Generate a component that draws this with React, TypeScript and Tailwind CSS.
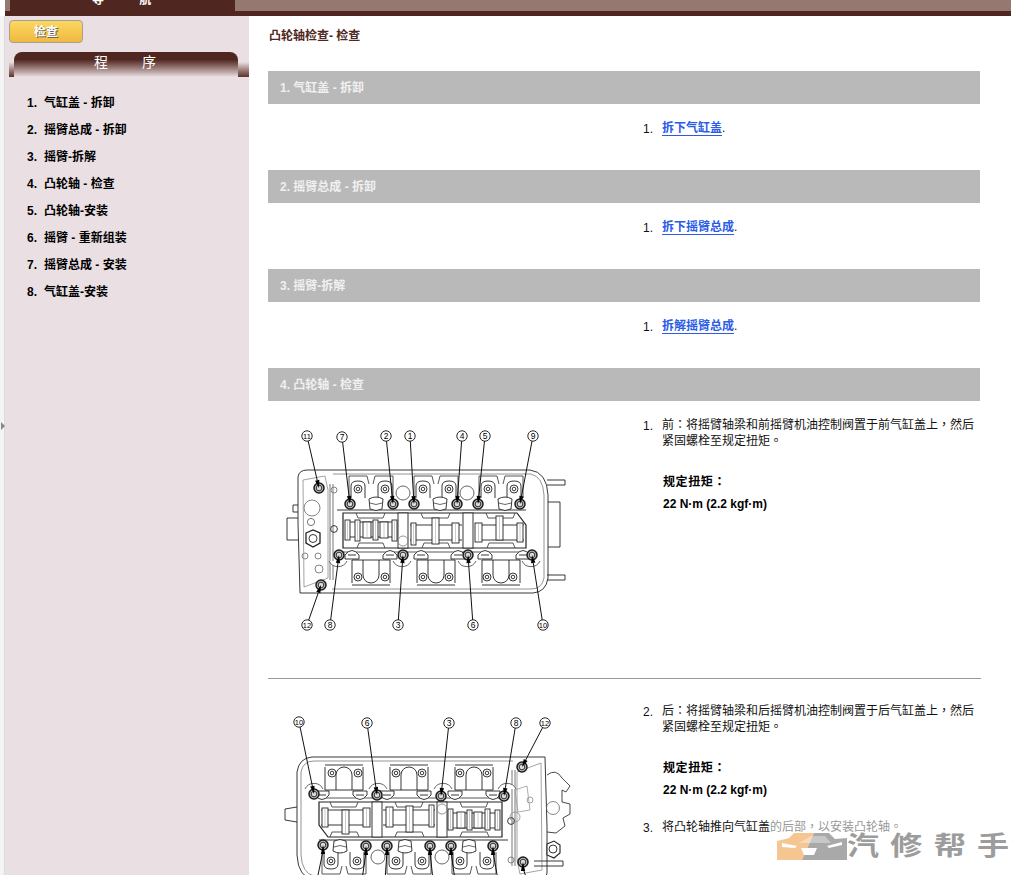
import React from "react";

const FONT = "font-['Liberation_Sans','Noto_Sans_CJK_TC',sans-serif]";

const NAV = [
  "气缸盖 - 拆卸",
  "摇臂总成 - 拆卸",
  "摇臂-拆解",
  "凸轮轴 - 检查",
  "凸轮轴-安装",
  "摇臂 - 重新组装",
  "摇臂总成 - 安装",
  "气缸盖-安装",
];

const SECTIONS = [
  { title: "1. 气缸盖 - 拆卸", link: "拆下气缸盖" },
  { title: "2. 摇臂总成 - 拆卸", link: "拆下摇臂总成" },
  { title: "3. 摇臂-拆解", link: "拆解摇臂总成" },
];

type Callout = { n: number; lx: number; ly: number; bx: number; by: number };

const FRONT: Callout[] = [
  { n: 11, lx: 307, ly: 436, bx: 319, by: 488 },
  { n: 7, lx: 342, ly: 437, bx: 350, by: 504 },
  { n: 2, lx: 386, ly: 436, bx: 393, by: 504 },
  { n: 1, lx: 410, ly: 436, bx: 414, by: 504 },
  { n: 4, lx: 462, ly: 436, bx: 457, by: 504 },
  { n: 5, lx: 485, ly: 436, bx: 478, by: 504 },
  { n: 9, lx: 533, ly: 436, bx: 520, by: 504 },
  { n: 12, lx: 307, ly: 625, bx: 321, by: 585 },
  { n: 8, lx: 330, ly: 625, bx: 339, by: 555 },
  { n: 3, lx: 398, ly: 625, bx: 403, by: 555 },
  { n: 6, lx: 473, ly: 625, bx: 468, by: 555 },
  { n: 10, lx: 543, ly: 625, bx: 532, by: 555 },
];

const REAR: Callout[] = [
  { n: 10, lx: 299, ly: 722, bx: 314, by: 794 },
  { n: 6, lx: 367, ly: 723, bx: 377, by: 795 },
  { n: 3, lx: 449, ly: 723, bx: 441, by: 796 },
  { n: 8, lx: 516, ly: 723, bx: 504, by: 796 },
  { n: 12, lx: 545, ly: 723, bx: 522, by: 767 },
];

const REAR_LOWER = [
  [323, 845, 317],
  [366, 846, 362],
  [387, 846, 385],
  [430, 846, 433],
  [451, 846, 455],
  [493, 846, 498],
  [523, 862, 527],
];

const PADS = [358, 385, 423, 449, 488, 514];
const GROUPS = [371, 436, 501];
const TAPPETS = [376, 440, 505];
const CAPS = [345, 383, 414, 451, 478, 516];
const BOSSES = [338, 402, 467, 531];
// [x, width, top, bottom] of the cam lobes seen through the window
const LOBES = [
  [345, 5, 520, 540],
  [355, 5, 520, 541],
  [363, 8, 522, 538],
  [373, 5, 520, 540],
  [380, 8, 522, 538],
  [392, 5, 520, 541],
  [411, 5, 523, 545],
  [432, 7, 518, 544],
  [452, 7, 523, 543],
  [475, 7, 523, 542],
  [496, 7, 516, 540],
  [517, 6, 523, 542],
];

// Cylinder head line drawing, in page coordinates of the front view.
const Head = ({ rear }: { rear?: boolean }) => (
  <g transform={rear ? "rotate(180 422.5 675)" : undefined} fill="none" stroke="#222" strokeWidth="0.9">
    <path d="M298 477 Q299 470 307 470 L530 470 Q547 472 548 495 L548 578 Q546 592 533 593 L300 593 L298 523 Z" />
    <path d="M333 474 L531 474 Q543 477 544 495 L544 578 Q542 589 531 589 L332 589" stroke="#888" />
    {!rear && (
      <>
        <path d="M547 480 L565 480 L565 485 L547 485 M547 575 L565 575 L565 580 L547 580 M548 502 L560 502 L560 547 L548 547" />
        <path d="M298 505 L293 505 L293 512 L298 512 M298 518 L287 518 L287 540 L298 540" />
        <path d="M306 533 L313 530 L320 533 L320 543 L313 547 L306 543 Z" strokeWidth="1.3" />
        <circle cx="313" cy="538.5" r="4" />
        <circle cx="312" cy="508" r="8" stroke="#777" />
        <circle cx="311" cy="522" r="3.6" stroke="#666" />
        <circle cx="305" cy="556" r="3" stroke="#777" />
        <circle cx="318" cy="556" r="3" stroke="#777" />
        <circle cx="319" cy="569" r="4" stroke="#777" />
      </>
    )}
    <path d="M303 480 L325 476 L328 490 L328 578 L304 587 Z" stroke="#999" />
    <path d="M330 484 L330 580 M333 484 L333 580" stroke="#666" />
    <circle cx="334" cy="529" r="3.4" />
    <circle cx="334" cy="490" r="3" stroke="#777" />

    {GROUPS.map((g) => (
      <path key={g} d={`M${g - 22} 498 L${g - 22} 476 L${g - 4} 476 L${g - 2} 484 M${g + 2} 484 L${g + 4} 476 L${g + 22} 476 L${g + 22} 498`} stroke="#444" />
    ))}
    {PADS.map((x) => (
      <g key={x}>
        <path d={`M${x - 7} 498 L${x - 7} 486 Q${x - 7} 481 ${x} 481 Q${x + 7} 481 ${x + 7} 486 L${x + 7} 498`} />
        <circle cx={x} cy={489} r="4" />
        <circle cx={x} cy={489} r="1.8" />
      </g>
    ))}
    <circle cx="403" cy="493" r="7" stroke="#555" />
    <circle cx="467" cy="493" r="7" stroke="#555" />
    <path d="M337 510 L526 510" />

    <path d="M343 513 L517 513 L526 525 L526 548 L343 548 Z" strokeWidth="1.2" />
    <path d="M345 522 L397 522 M345 537 L397 537 M410 525 L462 525 M410 540 L462 540 M475 525 L524 525 M475 540 L524 540" />
    {GROUPS.map((g) => (
      <path key={g} d={`M${g - 15} 513 L${g - 13} 518 L${g + 12} 518 L${g + 14} 513 M${g - 14} 548 L${g - 12} 543 L${g + 12} 543 L${g + 14} 548`} stroke="#444" />
    ))}
    {LOBES.map(([x, w, top, bottom]) => (
      <g key={x}>
        <rect x={x} y={top} width={w} height={bottom - top} fill="#fff" />
        <line x1={x + w / 2} y1={top} x2={x + w / 2} y2={bottom} stroke="#aaa" strokeWidth="0.6" />
      </g>
    ))}
    <rect x="398" y="513" width="10" height="35" fill="#fff" />
    <rect x="463" y="513" width="10" height="35" fill="#fff" />
    <circle cx="403" cy="541" r="5" stroke="#888" />

    {TAPPETS.map((x) => (
      <g key={x}>
        <path d={`M${x - 7} 499 Q${x} 495 ${x + 7} 499 L${x + 6} 509 Q${x} 512 ${x - 6} 509 Z`} fill="#fff" />
        <path d={`M${x - 6} 503 Q${x} 506 ${x + 6} 503`} stroke="#555" />
      </g>
    ))}

    <path d="M343 552 L526 552" stroke="#444" />
    {GROUPS.map((g) => (
      <path key={g} d={`M${g - 19} 560 L${g + 19} 560 M${g - 19} 560 L${g - 19} 583 M${g + 19} 560 L${g + 19} 583 M${g - 8} 560 L${g - 8} 575 M${g + 8} 560 L${g + 8} 575 M${g - 19} 585 L${g + 19} 585`} fill="#fff" />
    ))}
    {BOSSES.map((x) => (
      <path key={x} d={`M${x - 9} 561 A10 10 0 0 0 ${x + 9} 561`} stroke="#555" fill="#fff" />
    ))}
    {GROUPS.map((g) => (
      <path key={g} d={`M${g - 8} 575 A8 8 0 0 0 ${g + 8} 575`} fill="#fff" />
    ))}
    {[358, 385, 423, 449, 487, 513].map((x) => (
      <g key={x}>
        <circle cx={x} cy={577} r="4" fill="#fff" />
        <circle cx={x} cy={577} r="1.8" />
      </g>
    ))}
    {CAPS.map((x) => (
      <path key={x} d={`M${x} 559 L${x} 555 Q${x + 7} 546 ${x + 14} 555 L${x + 14} 559 Z M${x + 3} 555 L${x + 11} 555`} fill="#fff" />
    ))}
  </g>
);

const Bolt = ({ x, y }: { x: number; y: number }) => (
  <g>
    <circle cx={x} cy={y} r="5" fill="#b8b8b8" stroke="#1c1c1c" strokeWidth="1.5" />
    <circle cx={x} cy={y} r="2.8" fill="#dcdcdc" stroke="#333" strokeWidth="1" />
  </g>
);

const Mark = ({ c }: { c: Callout }) => {
  const dx = c.bx - c.lx;
  const dy = c.by - c.ly;
  const len = Math.hypot(dx, dy);
  const ux = dx / len;
  const uy = dy / len;
  const baseX = c.bx - ux * 8;
  const baseY = c.by - uy * 8;
  return (
    <g>
      <line x1={c.lx + ux * 5} y1={c.ly + uy * 5} x2={baseX} y2={baseY} stroke="#111" strokeWidth="1" />
      <path d={`M${c.bx} ${c.by} L${baseX - uy * 2.2} ${baseY + ux * 2.2} L${baseX + uy * 2.2} ${baseY - ux * 2.2} Z`} fill="#000" />
      <circle cx={c.lx} cy={c.ly} r="5.2" fill="#fff" stroke="#111" strokeWidth="0.9" />
      <text x={c.lx} y={c.ly + 3} textAnchor="middle" fontSize={c.n > 9 ? 7.5 : 8.5} fill="#000" fontFamily="Liberation Sans, sans-serif">
        {c.n}
      </text>
    </g>
  );
};

const FrontDiagram = () => (
  <svg width="375" height="277" viewBox="268 401 375 277" className="block shrink-0">
    <Head />
    {FRONT.map((c) => (
      <Bolt key={c.n} x={c.bx} y={c.by} />
    ))}
    {FRONT.map((c) => (
      <Mark key={c.n} c={c} />
    ))}
  </svg>
);

const RearDiagram = () => (
  <svg width="375" height="196" viewBox="268 679 375 196" className="block shrink-0">
    <Head rear />
    <path d="M297 807 L285 809 L285 820 L297 822" fill="none" stroke="#222" strokeWidth="0.9" />
    <path d="M547 775 Q556 768 562 778 L570 786 L566 792 L562 790 L562 802 L570 804 L570 814 L563 818 L565 826 L556 833 L547 832" fill="none" stroke="#333" strokeWidth="0.9" />
    <circle cx="553" cy="808" r="6.5" fill="none" stroke="#666" strokeWidth="0.8" />
    <circle cx="515" cy="817" r="5" fill="none" stroke="#888" strokeWidth="0.8" />
    <circle cx="530" cy="800" r="3" fill="none" stroke="#888" strokeWidth="0.8" />
    <path d="M515 790 L527 786 L530 810 L518 812 Z" fill="none" stroke="#999" strokeWidth="0.8" />
    <path d="M547 844 L554 841 L560 845 L560 853 L554 858 L547 855 Z" fill="#fff" stroke="#222" strokeWidth="1.1" />
    <circle cx="553" cy="849" r="4" fill="none" stroke="#222" strokeWidth="0.9" />
    <path d="M534 861 L563 861 L563 866 L534 866" fill="none" stroke="#222" strokeWidth="0.9" />
    {REAR.map((c) => (
      <Bolt key={c.n} x={c.bx} y={c.by} />
    ))}
    {REAR.map((c) => (
      <Mark key={c.n} c={c} />
    ))}
    {REAR_LOWER.map(([x, y, ex]) => (
      <g key={x}>
        <Bolt x={x} y={y} />
        <line x1={x} y1={y + 6} x2={ex} y2={880} stroke="#111" strokeWidth="1" />
        <path d={`M${x} ${y} L${x - 2.2} ${y + 9} L${x + 2.2} ${y + 9} Z`} fill="#000" />
      </g>
    ))}
  </svg>
);

const Step = ({ n, children }: { n: number; children: React.ReactNode }) => (
  <div className="flex text-[12px] leading-[16px] text-[#111]">
    <span className="w-[19px] shrink-0 pt-[1px]">{n}.</span>
    <div className="flex-1">{children}</div>
  </div>
);

const Torque = () => (
  <div className="mt-[25px] pl-[20px] text-[12px] font-bold text-black">
    <div className="leading-[16px] tracking-[0.6px]">规定扭矩：</div>
    <div className="mt-[6px] leading-[16px]">22 N·m (2.2 kgf·m)</div>
  </div>
);

const App = () => (
  <div className={`${FONT} relative flex h-[875px] w-[1011px] flex-col overflow-hidden bg-white`}>
    <header className="flex h-4 shrink-0 flex-col pl-[5px]">
      <div className="flex h-[11px] overflow-hidden">
        <div className="w-[5px] bg-[#957870]" />
        <div className="relative h-[11px] w-[225px] bg-[#4f2720]">
          <div className="absolute -top-[7px] left-[82px] text-[12px] leading-[14px] font-bold text-white [word-spacing:32px]">
            导 航
          </div>
        </div>
        <div className="flex-1 bg-[#957870]" />
      </div>
      <div className="h-[5px] bg-[#4f2720]" />
    </header>

    <div className="flex min-h-0 flex-1">
      <div className="relative w-[5px] shrink-0 border-r border-[#dcdcdc] bg-[#f4f4f4]">
        <div className="absolute top-[406px] left-[1px] h-0 w-0 border-y-[4px] border-l-[4px] border-y-transparent border-l-[#888]" />
      </div>

      <aside className="w-[244px] shrink-0 bg-[#eadfe3] pt-1">
        <button className="ml-1 flex h-[23px] w-[74px] items-center justify-center rounded-[4px] border border-[#a3a09a] bg-linear-to-b from-[#fbd75f] to-[#f0b93f] text-[12px] font-bold text-white [text-shadow:1px_1px_0_#665]">
          检查
        </button>
        <div className="mt-[9px] ml-1 h-[25px] bg-linear-to-b from-[#eadfe3] from-40% to-[#5d342b]">
          <div className="ml-[5px] flex h-full w-[224px] justify-center rounded-t-lg bg-linear-to-b from-[#4f2720] from-30% to-[#eadfe3] pt-[2px] pr-[2px] text-[14px] leading-[17px] text-white [word-spacing:30px]">
            程 序
          </div>
        </div>
        <ol className="mt-[18px] flex flex-col gap-[11px] pl-[22px] text-[12px] leading-[16px] font-bold text-black">
          {NAV.map((item, i) => (
            <li key={item} className="flex">
              <span className="w-[17px] shrink-0">{i + 1}.</span>
              <span>{item}</span>
            </li>
          ))}
        </ol>
      </aside>

      <main className="min-w-0 flex-1 pl-[19px]">
        <h1 className="pt-[12px] pl-[1px] text-[12px] leading-[16px] font-bold text-[#4f2720]">凸轮轴检查- 检查</h1>
        <div className="mt-[27px] w-[712px]">
          {SECTIONS.map((s) => (
            <section key={s.title} className="h-[99px]">
              <h2 className="flex h-[33px] items-center bg-[#b9b9b9] pl-3 text-[12px] font-bold text-[#f0f0f0]">{s.title}</h2>
              <div className="pt-[16px] pl-[375px]">
                <Step n={1}>
                  <a className="border-b-[1.5px] border-[#2a5ce8] font-bold text-[#2a5ce8]">{s.link}</a>.
                </Step>
              </div>
            </section>
          ))}
          <h2 className="flex h-[33px] items-center bg-[#b9b9b9] pl-3 text-[12px] font-bold text-[#f0f0f0]">4. 凸轮轴 - 检查</h2>
        </div>

        <div className="flex h-[278px] w-[713px] border-b border-[#999]">
          <FrontDiagram />
          <div className="flex-1 pt-[16px] pr-[5px]">
            <Step n={1}>前：将摇臂轴梁和前摇臂机油控制阀置于前气缸盖上，然后紧固螺栓至规定扭矩。</Step>
            <Torque />
          </div>
        </div>

        <div className="flex w-[713px]">
          <RearDiagram />
          <div className="flex-1 pt-[24px] pr-[5px]">
            <Step n={2}>后：将摇臂轴梁和后摇臂机油控制阀置于后气缸盖上，然后紧固螺栓至规定扭矩。</Step>
            <Torque />
            <div className="mt-[21px]">
              <Step n={3}>
                将凸轮轴推向气缸盖<span className="text-[#999]">的后部，以安装凸轮轴。</span>
              </Step>
            </div>
          </div>
        </div>
      </main>
    </div>

    <div className="absolute top-[832px] left-[777px] flex items-start">
      <svg width="70" height="28" viewBox="0 0 70 28" className="mt-[1px] block shrink-0">
        <path d="M0 8 L12 5 L17 0 L37 0 L25 27 L0 27 Z" fill="#f6c692" />
        <path d="M37 0 L52 0 L58 6 L70 5 L70 27 L25 27 Z" fill="#a9a9a9" />
        <path d="M5 10 L20 13 L18 15 L5 14 Z M50 13 L65 9 L65 12 L52 15 Z M24 15 L40 15 L37 22 L27 22 Z" fill="#fff" />
        <path d="M22 10 L34 3 L48 3 L54 10 Z" fill="#fff" fillOpacity="0.35" />
      </svg>
      <div className="flex w-[162px] justify-between text-[32px] leading-[28px] font-bold text-[#9c9c9c] [transform:scaleY(0.8)]">
        <span>汽</span>
        <span>修</span>
        <span>帮</span>
        <span>手</span>
      </div>
    </div>
  </div>
);

export default App;
